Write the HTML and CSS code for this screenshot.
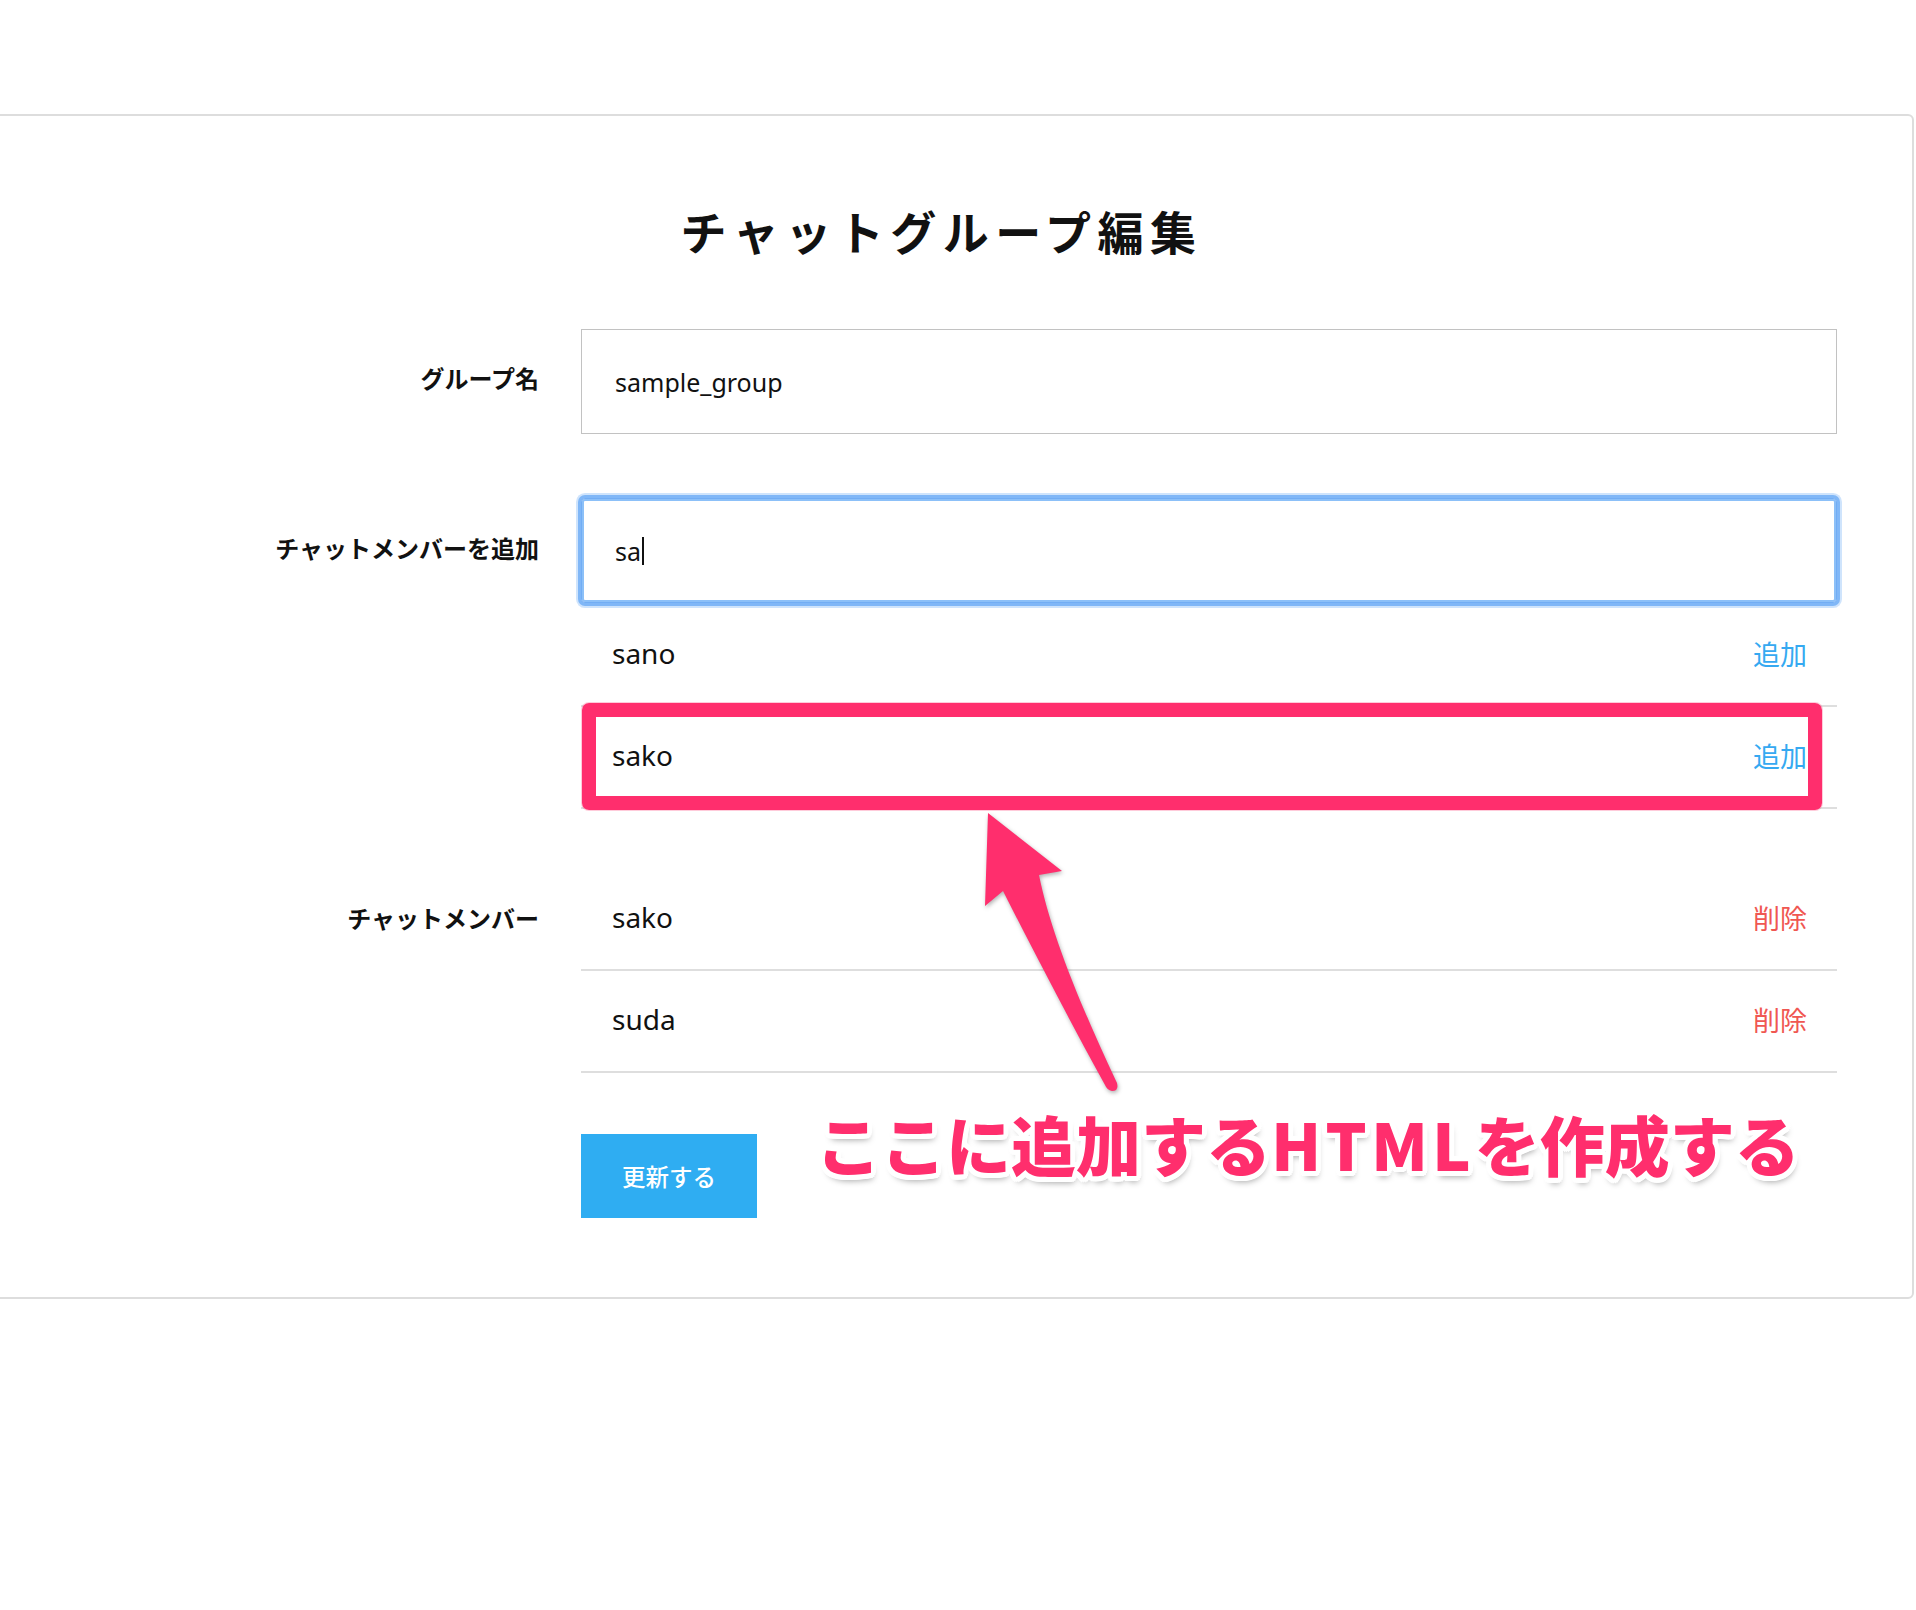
FILE: index.html
```html
<!DOCTYPE html>
<html lang="ja">
<head>
<meta charset="utf-8">
<title>チャットグループ編集</title>
<link rel="stylesheet" href="styles.css">
</head>
<body>
<div class="page">
  <main class="card">
    <div class="inner">
      <h1 class="title">チャットグループ編集</h1>
      <form class="form">
        <div class="field field-group">
          <label class="label" for="group-name">グループ名</label>
          <div class="control">
            <input class="input" id="group-name" type="text" value="sample_group">
          </div>
        </div>

        <div class="field field-add">
          <label class="label">チャットメンバーを追加</label>
          <div class="control">
            <div class="input is-focused" role="textbox">sa<span class="caret"></span></div>
            <ul class="list suggestions">
              <li class="row"><span class="name">sano</span><a class="action add">追加</a></li>
              <li class="row"><span class="name">sako</span><a class="action add">追加</a></li>
              <li class="highlight" aria-hidden="true"></li>
            </ul>
          </div>
        </div>

        <div class="field field-members">
          <label class="label">チャットメンバー</label>
          <div class="control">
            <ul class="list members">
              <li class="row"><span class="name">sako</span><a class="action remove">削除</a></li>
              <li class="row"><span class="name">suda</span><a class="action remove">削除</a></li>
            </ul>
          </div>
        </div>

        <div class="field field-actions">
          <span></span>
          <div class="control">
            <button class="btn" type="button">更新する</button>
          </div>
        </div>
      </form>
    </div>
  </main>

  <svg class="arrow" width="180" height="300" viewBox="0 0 180 300" aria-hidden="true">
    <path d="M28,13 L102,71 L79,75 C90,130 118,200 157,283 Q159,291 152,291 Q147,290 145,285 C112,225 78,160 43,91 L25,106 Z" fill="#ff2e6d"/>
  </svg>
  <p class="note">ここに追加する<span class="note-latin">HTML</span>を作成する</p>
</div>
</body>
</html>
```

FILE: styles.css
```css
* { box-sizing: border-box; }

body {
  margin: 0;
  background: #fff;
  color: #111;
  font-family: "Noto Sans", "Noto Sans CJK JP", sans-serif;
}

.page {
  position: relative;
  padding-top: 114px;
  min-height: 1610px;
}

.card {
  margin-left: -4px;
  width: 1918px;
  border: 2px solid #dddddd;
  border-radius: 0 6px 6px 0;
  padding: 91px 0 79px 2px;
}

.inner {
  width: 1837px;
}

.title {
  margin: 0 0 76px;
  padding-left: 46px;
  text-align: center;
  font-family: "Noto Sans CJK JP", sans-serif;
  font-weight: 700;
  font-size: 46px;
  line-height: 46px;
  letter-spacing: 6.5px;
  color: #111;
}

.form {
  margin: 0;
}

.field {
  display: grid;
  grid-template-columns: 539px 1fr;
  column-gap: 42px;
  align-items: start;
}

.label {
  height: 105px;
  padding-bottom: 8px;
  display: flex;
  align-items: center;
  justify-content: flex-end;
  font-family: "Noto Sans CJK JP", sans-serif;
  font-weight: 700;
  font-size: 24px;
  color: #111;
}

.field-add .label { padding-bottom: 6px; }

.field-group { margin-bottom: 64px; }
.field-add { margin-bottom: 60px; }
.field-members { margin-bottom: 61px; }
.field-members .label { height: 100px; padding-bottom: 4px; }

.input {
  display: flex;
  align-items: center;
  width: 100%;
  height: 105px;
  margin: 0;
  padding: 0 0 0 33px;
  border: 1px solid #c2c2c2;
  border-radius: 0;
  background: #fff;
  font-family: "Noto Sans", "Noto Sans CJK JP", sans-serif;
  font-size: 25px;
  color: #111;
  outline: none;
}

.input.is-focused {
  border-color: #72adf4;
  border-radius: 4px;
  box-shadow: inset 0 0 0 2px #8cc0f8, 0 0 0 3px #80b7f7, 0 0 0 5px #cfe4fc;
}

.caret {
  display: inline-block;
  width: 2px;
  height: 28px;
  margin-left: 1px;
  background: #111;
}

.list {
  list-style: none;
  margin: 0;
  padding: 0;
}

.suggestions {
  position: relative;
  margin-top: 2px;
}

.row {
  display: flex;
  align-items: center;
  justify-content: space-between;
  height: 102px;
  padding: 0 30px 4px 31px;
  border-bottom: 2px solid #dedede;
  font-size: 28px;
}

.name { color: #111; }

.action {
  font-family: "Noto Sans CJK JP", sans-serif;
  font-size: 27px;
  cursor: pointer;
}

.add { color: #35a9f1; }
.remove { color: #f05752; }

.highlight {
  position: absolute;
  left: 1px;
  top: 98px;
  width: 1240px;
  height: 107px;
  border: 14px solid #ff2e6d;
  border-radius: 7px;
  box-shadow: 0 0 0 1px rgba(255, 46, 109, 0.25);
}

.btn {
  display: block;
  width: 176px;
  height: 84px;
  border: none;
  background: #2fadf2;
  color: #fff;
  font-family: "Noto Sans CJK JP", sans-serif;
  font-weight: 500;
  font-size: 23.5px;
  cursor: pointer;
}

.arrow {
  position: absolute;
  left: 960px;
  top: 800px;
  filter: drop-shadow(1px 2px 2px rgba(0, 0, 0, 0.3));
}

.note {
  position: absolute;
  left: 816px;
  top: 1111px;
  margin: 0;
  font-family: "Noto Sans CJK JP", sans-serif;
  font-weight: 900;
  font-size: 65px;
  line-height: 65px;
  color: #ff2e6d;
  white-space: nowrap;
  text-shadow:
    5px 0 0 #fff, -5px 0 0 #fff, 0 5px 0 #fff, 0 -5px 0 #fff,
    3.5px 3.5px 0 #fff, -3.5px 3.5px 0 #fff, 3.5px -3.5px 0 #fff, -3.5px -3.5px 0 #fff,
    4.6px 1.9px 0 #fff, -4.6px 1.9px 0 #fff, 4.6px -1.9px 0 #fff, -4.6px -1.9px 0 #fff,
    1.9px 4.6px 0 #fff, -1.9px 4.6px 0 #fff, 1.9px -4.6px 0 #fff, -1.9px -4.6px 0 #fff,
    2px 6px 6px rgba(0, 0, 0, 0.35);
}

.note-latin {
  letter-spacing: 4px;
}
```
